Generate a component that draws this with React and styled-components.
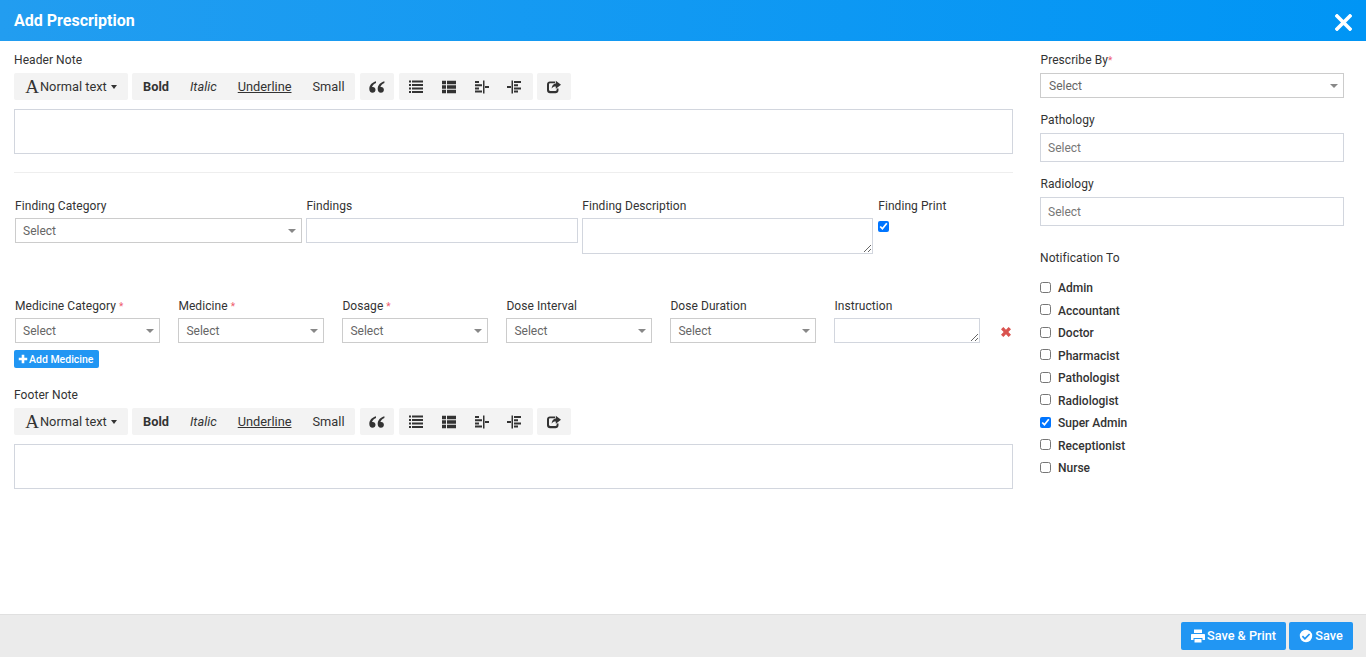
import React from "react";
import styled, { createGlobalStyle } from "styled-components";

const Global = createGlobalStyle`
  html, body { margin: 0; padding: 0; height: 100%; background: #fff; }
  * { box-sizing: border-box; }
  body { font-family: Roboto, "Liberation Sans", sans-serif; font-size: 12px; color: #333; }
`;

const Page = styled.div`
  height: 100vh;
  display: flex;
  flex-direction: column;
  overflow: hidden;
`;
const Header = styled.header`
  height: 41px;
  flex: none;
  display: flex;
  align-items: center;
  justify-content: space-between;
  padding: 0 14px;
  background: linear-gradient(90deg, #229df0 0%, #0095f5 100%);
  color: #fff;
`;
const Title = styled.h1`
  margin: 0;
  font-size: 16px;
  line-height: 41px;
  font-weight: 700;
`;
const Close = styled.svg`
  width: 17px;
  height: 17px;
  margin-top: 3px;
`;
const Main = styled.main`
  flex: 1;
  display: flex;
  min-height: 0;
  padding: 0 22px 0 14px;
`;
const LeftCol = styled.div`
  width: 999px;
  flex: none;
  padding-top: 12px;
`;
const RightCol = styled.aside`
  width: 304px;
  margin-left: 27px;
  flex: none;
  padding-top: 12px;
`;
const Label = styled.label`
  display: block;
  height: 14px;
  line-height: 14px;
  font-size: 12px;
  letter-spacing: 0.07px;
  color: #333;
  white-space: nowrap;
  margin-bottom: ${(p) => p.$mb ?? 5}px;
`;
const Star = styled.span`
  color: #ee5b6b;
  font-size: 10px;
  margin-left: ${(p) => p.$gap ?? 0}px;
`;
const Toolbar = styled.div`
  display: flex;
  gap: 4px;
  height: 27px;
  margin-top: 6px;
`;
const Group = styled.div`
  width: ${(p) => p.$w}px;
  height: 27px;
  flex: none;
  margin-left: ${(p) => p.$ml || 0}px;
  background: #f3f3f3;
  border-radius: 2px;
  display: flex;
  align-items: center;
  justify-content: ${(p) => p.$justify || "center"};
  padding: ${(p) => p.$pad || "0"};
  color: #333;
`;
const ToolText = styled.span`
  font-size: 12.8px;
  color: #333;
  font-weight: ${(p) => (p.$bold ? 700 : 400)};
  font-style: ${(p) => (p.$italic ? "italic" : "normal")};
  text-decoration: ${(p) => (p.$under ? "underline" : "none")};
  margin-left: ${(p) => p.$ml || 0}px;
`;
const Caret = styled.span`
  display: inline-block;
  width: 0;
  height: 0;
  margin-left: 4px;
  margin-top: 1px;
  border-left: 3.5px solid transparent;
  border-right: 3.5px solid transparent;
  border-top: 4px solid #333;
`;
const FontGlyph = styled.span`
  font-family: "Liberation Serif", serif;
  font-size: 19px;
  line-height: 18px;
  color: #333;
  margin-right: 1px;
`;
const ToolIcon = styled.svg`
  width: ${(p) => p.$w || 14}px;
  height: 14px;
  flex: none;
  margin-left: ${(p) => p.$ml || 0}px;
  fill: #333;
`;
const Editor = styled.div`
  height: 45px;
  margin-top: 9px;
  border: 1px solid #d2d6de;
  background: #fff;
`;
const Rule = styled.hr`
  margin: 18px 0 0;
  border: 0;
  border-top: 1px solid #eee;
`;
const FindingRow = styled.div`
  display: flex;
  margin-top: 26px;
  padding-left: 1px;
  height: 100px;
`;
const Field = styled.div`
  width: ${(p) => p.$w}px;
  margin-left: ${(p) => p.$ml || 0}px;
  flex: none;
`;
const SelectBox = styled.div`
  position: relative;
  height: 25px;
  border: 1px solid #ccc;
  background: #fff;
  padding-left: ${(p) => p.$pad || 7}px;
  line-height: 25px;
  color: #666;
  font-size: 12px;
  &::after {
    content: "";
    position: absolute;
    right: 5px;
    top: 10px;
    border-left: 4px solid transparent;
    border-right: 4px solid transparent;
    border-top: 4px solid #888;
  }
`;
const TextInput = styled.input`
  display: block;
  width: 100%;
  height: ${(p) => p.$h || 25}px;
  border: 1px solid #d2d6de;
  padding: 1px 7px 0;
  font: 12px Roboto, sans-serif;
  color: #666;
  outline: none;
  background: #fff;
  border-radius: 0;
  &::placeholder { color: #777; opacity: 1; }
`;
const TextArea = styled.textarea`
  display: block;
  width: 100%;
  height: ${(p) => p.$h}px;
  border: 1px solid #d2d6de;
  padding: 0;
  margin: 0;
  outline: none;
  border-radius: 0;
  background: #fff;
`;
const Check = styled.input.attrs({ type: "checkbox" })`
  margin: 0;
  width: 11px;
  height: 11px;
  accent-color: #0075ff;
  display: block;
  flex: none;
`;
const PrintCheck = styled(Check)`
  && { margin-top: 8px; }
`;
const RowCheck = styled(Check)`
  && { margin-bottom: 1.5px; }
`;
const MedicineRow = styled.div`
  display: flex;
  padding-left: 1px;
  gap: 18px;
  align-items: flex-start;
`;
const MedField = styled.div`
  width: ${(p) => p.$w}px;
  flex: none;
`;
const Remove = styled.svg`
  width: 10px;
  height: 10px;
  flex: none;
  margin: 27.5px 0 0 3px;
  fill: #d9534f;
`;
const AddBtn = styled.button`
  display: flex;
  align-items: center;
  gap: 1.5px;
  height: 18px;
  width: 85px;
  margin-top: 7px;
  padding: 0 0 0 3.5px;
  border: 0;
  border-radius: 2px;
  background: #2196f3;
  color: #fff;
  font: 500 10.5px Roboto, sans-serif;
  white-space: nowrap;
`;
const FooterNote = styled.div`
  margin-top: 20px;
`;
const RightField = styled.div`
  margin-bottom: ${(p) => p.$mb || 0}px;
`;
const RightLabel = styled(Label)`
  margin-bottom: 6px;
  padding-left: 0.5px;
`;
const NotifyHead = styled(Label)`
  margin: 25px 0 0;
`;
const NotifyList = styled.div`
  margin-top: 11.75px;
  display: flex;
  flex-direction: column;
`;
const NotifyRow = styled.label`
  display: flex;
  align-items: center;
  height: 22.5px;
  gap: 7px;
  font-size: 12px;
  font-weight: 500;
  color: #333;
`;
const Footer = styled.footer`
  height: 43px;
  flex: none;
  background: #ebebeb;
  border-top: 1px solid #e0e0e0;
  display: flex;
  justify-content: flex-end;
  align-items: center;
  gap: 3px;
  padding: 0 13px 0 0;
`;
const SaveBtn = styled.button`
  display: flex;
  align-items: center;
  justify-content: center;
  gap: 2px;
  width: ${(p) => p.$w}px;
  height: 28px;
  padding: 0 0 1px;
  border: 0;
  border-radius: 2px;
  background: #2196f3;
  color: #fff;
  font: 500 12.7px Roboto, sans-serif;
  white-space: nowrap;
`;
const BtnIcon = styled.svg`
  width: 14px;
  height: 14px;
  fill: #fff;
  flex: none;
`;
const PlusIcon = styled.svg`
  width: 10px;
  height: 10px;
  fill: #fff;
  flex: none;
`;

const Quote = () => (
  <ToolIcon $w={16} viewBox="0 0 16 14">
    <path d="M7 1.200C3 2.400.3 5 .3 9.100c0 2.200 1.300 3.700 3.200 3.700 1.700 0 3-1.300 3-3 0-1.600-1.100-2.800-2.700-2.800-.3 0-.6 0-.8.1.4-1.700 1.900-3.200 4-4.200zM15.400 1.200c-4 1.200-6.700 3.800-6.700 7.900 0 2.200 1.300 3.700 3.200 3.700 1.700 0 3-1.300 3-3 0-1.600-1.100-2.800-2.700-2.800-.3 0-.6 0-.8.100.4-1.700 1.900-3.200 4-4.200z" />
  </ToolIcon>
);
const ListIcon = ({ ml }) => (
  <ToolIcon viewBox="0 0 14 14" $ml={ml}>
    <path d="M0 .5h2v2H0zM3 .5h11v2H3zM0 4h2v2H0zM3 4h11v2H3zM0 7.500h2v2H0zM3 7.500h11v2H3zM0 11h2v2H0zM3 11h11v2H3z" />
  </ToolIcon>
);
const ThListIcon = ({ ml }) => (
  <ToolIcon viewBox="0 0 14 14" $ml={ml}>
    <path d="M0 .8h4v3.400H0zM5 .8h9v3.400H5zM0 5.300h4v3.400H0zM5 5.300h9v3.400H5zM0 9.800h4v3.400H0zM5 9.800h9v3.400H5z" />
  </ToolIcon>
);
const IndentLeft = ({ ml }) => (
  <ToolIcon viewBox="0 0 14 14" $ml={ml}>
    <path d="M0 1h4v2H0zM0 4.200h7v2H0zM0 7.400h4v2H0zM0 10.600h7v2H0zM8 .5h1.500v13H8zM10 6h4v2h-4z" />
  </ToolIcon>
);
const IndentRight = ({ ml }) => (
  <ToolIcon viewBox="0 0 14 14" $ml={ml}>
    <path d="M7 1h7v2H7zM7 4.200h4v2H7zM7 7.400h7v2H7zM7 10.600h4v2H7zM4.500.5H6v13H4.500zM0 6h4v2H0z" />
  </ToolIcon>
);
const Share = () => (
  <ToolIcon viewBox="0 0 14 14">
    <path d="M2.800 1.500H8v1.800H3.200c-.7 0-1.200.5-1.200 1.200v5.300c0 .7.500 1.200 1.200 1.200h5.300c.7 0 1.200-.5 1.200-1.200V8.500h1.800v1.800c0 1.700-1.300 3-3 3H3c-1.700 0-3-1.300-3-3V4.500c0-1.700 1.300-3 2.800-3zM8.800.8 14 4.800 8.800 8.800V6.400c-2 0-3.300.6-4.200 2.200.2-3 1.800-4.800 4.200-5.200z" />
  </ToolIcon>
);

const WysiToolbar = () => (
  <Toolbar>
    <Group $w={114}>
      <FontGlyph>A</FontGlyph>
      <ToolText>Normal text</ToolText>
      <Caret />
    </Group>
    <Group $w={223} $justify="flex-start" $pad="0 0 0 11px">
      <ToolText $bold>Bold</ToolText>
      <ToolText $italic $ml={21}>Italic</ToolText>
      <ToolText $under $ml={21}>Underline</ToolText>
      <ToolText $ml={21}>Small</ToolText>
    </Group>
    <Group $w={34} $ml={1}><Quote /></Group>
    <Group $w={134} $ml={1} $justify="flex-start" $pad="0 0 0 10px">
      <ListIcon />
      <ThListIcon ml={19} />
      <IndentLeft ml={19} />
      <IndentRight ml={18} />
    </Group>
    <Group $w={34}><Share /></Group>
  </Toolbar>
);

const medicine = [
  ["Medicine Category", true],
  ["Medicine", true],
  ["Dosage", true],
  ["Dose Interval", false],
  ["Dose Duration", false],
];
const roles = ["Admin", "Accountant", "Doctor", "Pharmacist", "Pathologist", "Radiologist", "Super Admin", "Receptionist", "Nurse"];

export default function App() {
  return (
    <Page>
      <Global />
      <Header>
        <Title>Add Prescription</Title>
        <Close viewBox="0 0 17 17">
          <path d="M2 2l13 13M15 2L2 15" stroke="#fff" strokeWidth="3.600" strokeLinecap="square" fill="none" />
        </Close>
      </Header>
      <Main>
        <LeftCol>
          <Label $mb={0}>Header Note</Label>
          <WysiToolbar />
          <Editor />
          <Rule />
          <FindingRow>
            <Field $w={287.4}>
              <Label>Finding Category</Label>
              <SelectBox>Select</SelectBox>
            </Field>
            <Field $w={272} $ml={4}>
              <Label>Findings</Label>
              <TextInput />
            </Field>
            <Field $w={291} $ml={3.8}>
              <Label>Finding Description</Label>
              <TextArea $h={36} />
            </Field>
            <Field $w={90} $ml={5}>
              <Label>Finding Print</Label>
              <PrintCheck defaultChecked />
            </Field>
          </FindingRow>
          <MedicineRow>
            {medicine.map(([name, req], i) => (
              <MedField key={name} $w={i === 0 ? 145.4 : 146}>
                <Label>
                  {name}
                  {req && <Star $gap={3}>*</Star>}
                </Label>
                <SelectBox>Select</SelectBox>
              </MedField>
            ))}
            <MedField $w={146}>
              <Label>Instruction</Label>
              <TextArea $h={25} />
            </MedField>
            <Remove viewBox="0 0 11 11">
              <path d="M2.600 0 5.500 2.900 8.400 0 11 2.600 8.100 5.500 11 8.400 8.400 11 5.500 8.100 2.600 11 0 8.400 2.900 5.500 0 2.600z" />
            </Remove>
          </MedicineRow>
          <AddBtn>
            <PlusIcon viewBox="0 0 13 13">
              <path d="M4.800 1h3.400v3.800H12v3.400H8.200V12H4.800V8.200H1V4.800h3.800z" />
            </PlusIcon>
            Add Medicine
          </AddBtn>
          <FooterNote>
            <Label $mb={0}>Footer Note</Label>
            <WysiToolbar />
            <Editor />
          </FooterNote>
        </LeftCol>
        <RightCol>
          <RightField $mb={15}>
            <RightLabel>Prescribe By<Star>*</Star></RightLabel>
            <SelectBox $pad={8}>Select</SelectBox>
          </RightField>
          <RightField $mb={15}>
            <RightLabel>Pathology</RightLabel>
            <TextInput $h={29} placeholder="Select" />
          </RightField>
          <RightField>
            <RightLabel>Radiology</RightLabel>
            <TextInput $h={29} placeholder="Select" />
          </RightField>
          <NotifyHead>Notification To</NotifyHead>
          <NotifyList>
            {roles.map((r) => (
              <NotifyRow key={r}>
                <RowCheck defaultChecked={r === "Super Admin"} />
                {r}
              </NotifyRow>
            ))}
          </NotifyList>
        </RightCol>
      </Main>
      <Footer>
        <SaveBtn $w={105}>
          <BtnIcon viewBox="0 0 14 14">
            <path d="M3 .5h8v3.500H3zM1 5h12c.6 0 1 .4 1 1v5h-2.500V9h-9v2H0V6c0-.6.4-1 1-1zM3.500 10h7v3.500h-7z" />
          </BtnIcon>
          Save &amp; Print
        </SaveBtn>
        <SaveBtn $w={64}>
          <BtnIcon viewBox="0 0 14 14">
            <path fillRule="evenodd" d="M7 .8a6.200 6.200 0 1 1 0 12.400A6.200 6.200 0 0 1 7 .8zM4 6.600 2.800 7.800 5.900 10.900 11.200 5.600 10 4.400 5.900 8.500z" />
          </BtnIcon>
          Save
        </SaveBtn>
      </Footer>
    </Page>
  );
}
